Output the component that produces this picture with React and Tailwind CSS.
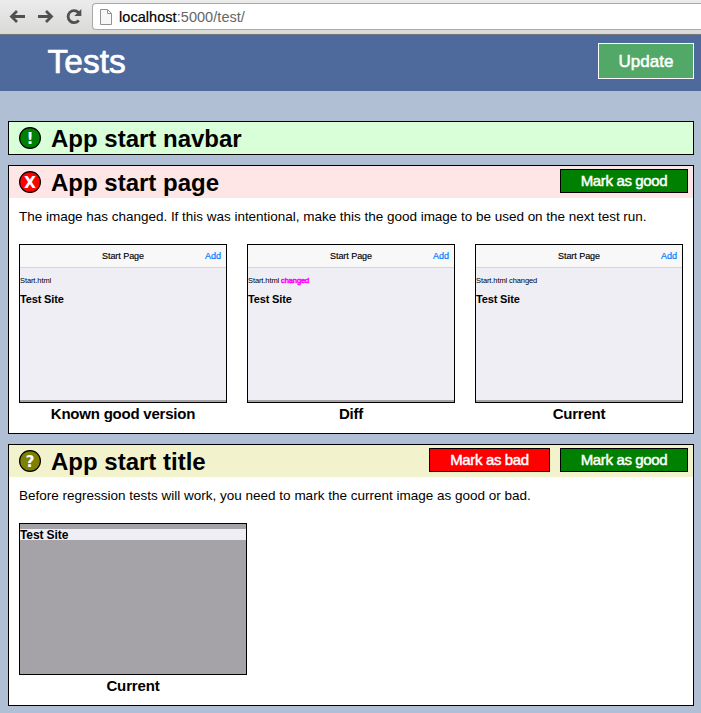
function Badge({ kind }) {
  const fills = { good: '#008000', bad: '#ff0000', unknown: '#808000' };
  const marks = { good: '!', bad: 'X', unknown: '?' };
  return (
    <svg className="block h-[22px] w-[22px] shrink-0" viewBox="0 0 22 22">
      <circle cx="11" cy="11" r="10.4" fill={fills[kind]} stroke="#000" strokeWidth="1.2" />
      <text x="11" y="16.5" textAnchor="middle" fill="#fff" className="font-['DejaVu_Sans',sans-serif] text-[15.5px] font-bold">
        {marks[kind]}
      </text>
    </svg>
  );
}

function Heading({ kind, title, className, children }) {
  return (
    <div className={`flex h-8 items-center pr-[5px] pl-[10px] ${className}`}>
      <Badge kind={kind} />
      <h2 className="ml-[10px] pt-[2px] text-[24px] leading-[30px] font-bold whitespace-nowrap">{title}</h2>
      <div className="ml-auto flex gap-[10px] self-start pt-[3px]">{children}</div>
    </div>
  );
}

function Mark({ label, className }) {
  return (
    <button className={`h-6 border border-black text-center text-[15px] leading-[22px] tracking-[-0.35px] whitespace-nowrap text-white [-webkit-text-stroke:0.45px_white] ${className}`}>
      {label}
    </button>
  );
}

function Shot({ caption, children }) {
  return (
    <figure className="w-[208px]">
      <div className="flex h-[159px] flex-col border border-black bg-[#efeef4]">
        <div className="grid h-[23px] grid-cols-[1fr_auto_1fr] items-center border-b border-[#d6d5da] bg-[#f8f8f8] text-[9px] leading-[22px]">
          <span className="col-start-2 tracking-[-0.05px] [-webkit-text-stroke:0.15px_black]">Start Page</span>
          <span className="pr-[5px] text-right text-[#007aff] [-webkit-text-stroke:0.2px_#007aff]">Add</span>
        </div>
        <p className="mt-[8px] text-[7.5px] leading-[10px] tracking-[-0.1px] whitespace-nowrap">{children}</p>
        <p className="mt-[6px] text-[11px] leading-[14px] font-bold tracking-[-0.15px]">Test Site</p>
        <div className="mt-auto h-[2px] bg-[#a5a3a8]" />
      </div>
      <figcaption className="text-center text-[15px] leading-[22px] font-bold tracking-[-0.22px]">{caption}</figcaption>
    </figure>
  );
}

export default function App() {
  return (
    <div className="h-[713px] w-[701px] overflow-hidden bg-[#b0bfd4] font-['Liberation_Sans',Arial,sans-serif] text-black">
      <div className="flex h-[35px] items-start border-b border-[#75787a] bg-linear-to-b from-[#ececec] to-[#d9d9d7] pl-[9px]">
        <svg className="mt-[8px] h-[17px] w-[75px] shrink-0" viewBox="0 0 75 17" fill="none" stroke="#505050" strokeWidth="2.8">
          <path d="M2.500 8.500H16M8 3 2.500 8.500l5.500 5.500M29 8.500H42.500M37 3 42.500 8.500l-5.500 5.500" />
          <path d="M69.800 12.300A6 6 0 1 1 69.500 4.500" />
          <path d="M72.300 1V8H65.300Z" fill="#505050" stroke="none" />
        </svg>
        <div className="mt-[3px] ml-[8px] flex h-[27px] flex-1 items-center rounded-l-[4px] border border-r-0 border-[#a9a9a9] bg-white pl-[7px]">
          <svg className="h-[16px] w-[12px]" viewBox="0 0 12 16" fill="#f7f7f7" stroke="#929292">
            <path d="M.5.5H7.500L11.500 4.500V15.500H.5ZM7.500.5V4.500H11.500" />
          </svg>
          <span className="ml-[7px] text-[14.500px] leading-[24px] tracking-[0.05px] text-[#666]">
            <span className="text-black [-webkit-text-stroke:0.2px_black]">localhost</span>:5000/test/
          </span>
        </div>
      </div>
      <header className="flex h-14 items-start justify-between bg-[#4e6a9c] pr-[7px] pl-[47.500px] text-white">
        <h1 className="text-[33.500px] leading-[54px] [-webkit-text-stroke:0.7px_white]">Tests</h1>
        <button className="mt-2 h-9 w-24 border border-white bg-[#52a866] pt-[1px] text-[17px] [-webkit-text-stroke:0.5px_white]">Update</button>
      </header>
      <main className="flex flex-col gap-[10px] pt-[30px] pr-[7px] pl-[8px]">
        <section className="border border-black">
          <Heading kind="good" title="App start navbar" className="bg-[#d8ffd8]" />
        </section>
        <section className="h-[269px] border border-black bg-white">
          <Heading kind="bad" title="App start page" className="bg-[#ffe6e6]">
            <Mark label="Mark as good" className="w-32 bg-[#008000]" />
          </Heading>
          <p className="mt-[9px] ml-[10px] text-[13.500px] leading-[20px] tracking-[-0.020px] whitespace-nowrap">
            The image has changed. If this was intentional, make this the good image to be used on the next test run.
          </p>
          <div className="mt-[17px] ml-[10px] flex gap-5">
            <Shot caption="Known good version">Start.html</Shot>
            <Shot caption="Diff">
              Start.html <span className="text-[#ff00ff] [-webkit-text-stroke:0.5px_#ff00ff]">changed</span>
            </Shot>
            <Shot caption="Current">Start.html changed</Shot>
          </div>
        </section>
        <section className="h-[262px] border border-black bg-white">
          <Heading kind="unknown" title="App start title" className="bg-[#f2f2cc]">
            <Mark label="Mark as bad" className="w-[121px] bg-[#ff0000]" />
            <Mark label="Mark as good" className="w-32 bg-[#008000]" />
          </Heading>
          <p className="mt-[9px] ml-[10px] text-[13.500px] leading-[20px] whitespace-nowrap">
            Before regression tests will work, you need to mark the current image as good or bad.
          </p>
          <figure className="mt-[17px] ml-[10px] w-[228px]">
            <div className="h-[152px] border border-black bg-[#a5a3a8] pt-[5px]">
              <p className="h-[11px] bg-[#efeef4] text-[12px] leading-[12px] font-bold tracking-[-0.1px]">Test Site</p>
            </div>
            <figcaption className="text-center text-[15px] leading-[22px] font-bold tracking-[-0.15px]">Current</figcaption>
          </figure>
        </section>
      </main>
    </div>
  );
}
